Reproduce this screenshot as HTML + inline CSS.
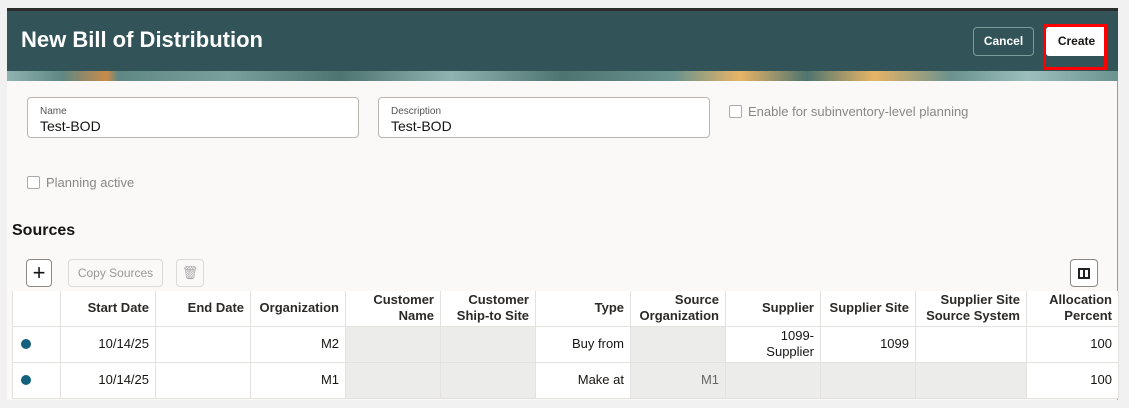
<!DOCTYPE html>
<html><head><style>
*{margin:0;padding:0;box-sizing:border-box}
body{width:1129px;height:408px;background:#f1f1f1;font-family:"Liberation Sans",sans-serif;position:relative;overflow:hidden;color:#161513}
.a{position:absolute}
.hdr{left:7px;top:8px;width:1111px;height:63px;background:#325357;border-top:3px solid #2b2b2b}
.strip{left:7px;top:71px;width:1111px;height:10px;background:linear-gradient(90deg,#8fb3b0 0,#5f8783 5%,#c88a4a 9%,#5f8783 10%,#7aa09c 20%,#4e7470 30%,#8fb3b0 40%,#4e7470 50%,#6a928e 60%,#e7b466 66%,#4e7470 72%,#e7b466 78%,#6a928e 85%,#9cbfbc 92%,#6a928e 100%)}
.main{left:7px;top:81px;width:1111px;height:319px;background:#faf9f8;border-right:1px solid #9a9a9a}
.inp{background:#fff;border:1px solid #b9b6b2;border-radius:4px;height:41px}
.inp .l{position:absolute;left:12px;top:8px;font-size:10px;color:#555}
.inp .v{position:absolute;left:12px;top:20px;font-size:14px}
.cb{width:13px;height:13px;border:1px solid #aaa;border-radius:2px;background:#fff}
.gt{color:#8a8885;font-size:13px}
table{position:absolute;left:12px;top:291px;border-collapse:collapse;font-size:13px;background:#fff}
td{border:1px solid #e4e2df;text-align:right;padding:0 6px;vertical-align:middle;line-height:16px}
tr.h td{height:35px;font-weight:bold;color:#2b2a28;border-top:none}
tr.r td{height:36px}
td.g{background:#ececea}
.dot{display:inline-block;width:10px;height:10px;border-radius:50%;background:#13617f;float:left;margin-left:2px}
</style></head><body>
<div class="a hdr"></div>
<div class="a" style="left:21px;top:27px;font-size:22px;font-weight:bold;color:#fff">New Bill of Distribution</div>
<div class="a" style="left:973px;top:27px;width:61px;height:29px;border:1px solid #7d9a9a;border-radius:4px;color:#fff;font-size:12px;font-weight:bold;text-align:center;line-height:27px">Cancel</div>
<div class="a" style="left:1046px;top:27px;width:61px;height:29px;background:#fff;border-radius:3px;font-size:12px;font-weight:bold;text-align:center;line-height:29px">Create</div>
<div class="a" style="left:1043px;top:24px;width:64px;height:46px;border:3px solid #f00"></div>
<div class="a strip"></div>
<div class="a main"></div>
<div class="a inp" style="left:27px;top:97px;width:332px"><span class="l">Name</span><span class="v">Test-BOD</span></div>
<div class="a inp" style="left:378px;top:97px;width:332px"><span class="l">Description</span><span class="v">Test-BOD</span></div>
<div class="a cb" style="left:729px;top:105px"></div>
<div class="a gt" style="left:748px;top:104px">Enable for subinventory-level planning</div>
<div class="a cb" style="left:27px;top:176px"></div>
<div class="a gt" style="left:46px;top:175px">Planning active</div>
<div class="a" style="left:12px;top:222px;font-size:16px;font-weight:bold">Sources</div>
<div class="a" style="left:26px;top:259px;width:26px;height:28px;border:1px solid #8d8a86;border-radius:4px;background:#fff;text-align:center;font-size:22px;line-height:25px">+</div>
<div class="a" style="left:68px;top:259px;width:95px;height:28px;border:1px solid #dcdad6;border-radius:4px;text-align:center;font-size:12px;line-height:26px;color:#9a9895">Copy Sources</div>
<div class="a" style="left:176px;top:259px;width:28px;height:28px;border:1px solid #dcdad6;border-radius:4px;text-align:center;font-size:13px;line-height:26px;color:#aaa">&#128465;</div>
<div class="a" style="left:1070px;top:259px;width:28px;height:28px;border:1px solid #8d8a86;border-radius:4px;background:#fff"><div class="a" style="left:7px;top:8px;width:12px;height:11px;border:2px solid #222"></div><div class="a" style="left:12px;top:8px;width:2px;height:11px;background:#222"></div></div>
<table>
<tr class="h"><td style="width:48px"></td><td style="width:95px">Start Date</td><td style="width:95px">End Date</td><td style="width:95px">Organization</td><td style="width:95px">Customer<br>Name</td><td style="width:95px">Customer<br>Ship-to Site</td><td style="width:95px">Type</td><td style="width:95px">Source<br>Organization</td><td style="width:95px">Supplier</td><td style="width:95px">Supplier Site</td><td style="width:111px">Supplier Site<br>Source System</td><td style="width:92px">Allocation<br>Percent</td></tr>
<tr class="r"><td><span class="dot"></span></td><td>10/14/25</td><td></td><td>M2</td><td class="g"></td><td class="g"></td><td>Buy from</td><td class="g"></td><td>1099-<br>Supplier</td><td>1099</td><td></td><td>100</td></tr>
<tr class="r"><td><span class="dot"></span></td><td>10/14/25</td><td></td><td>M1</td><td class="g"></td><td class="g"></td><td>Make at</td><td class="g" style="color:#666">M1</td><td class="g"></td><td class="g"></td><td class="g"></td><td>100</td></tr>
</table>
</body></html>
